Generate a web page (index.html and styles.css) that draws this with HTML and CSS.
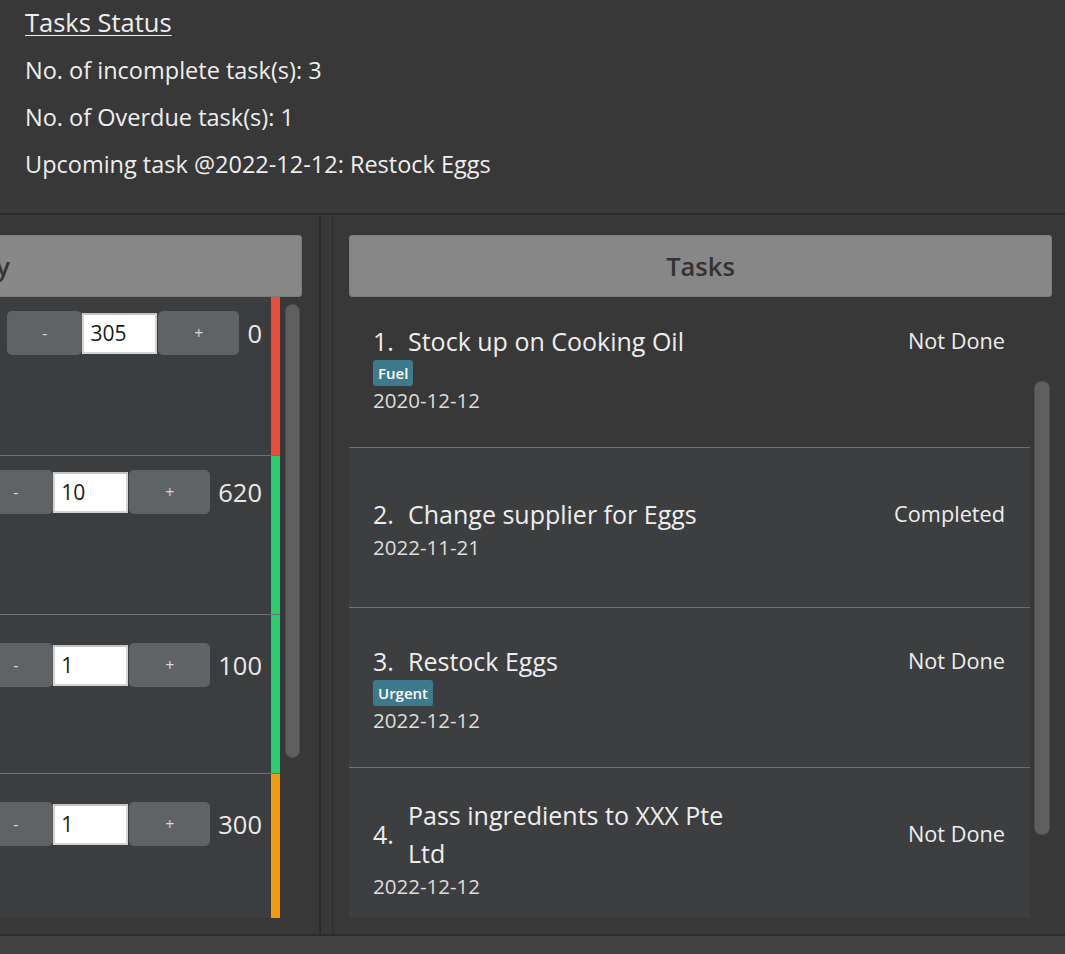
FILE: index.html
```html
<!DOCTYPE html>
<html lang="en">
<head>
<meta charset="utf-8">
<title>Tasks</title>
<link rel="stylesheet" href="styles.css">
</head>
<body>
<div class="app">
  <section class="status">
    <h1 class="status-title">Tasks Status</h1>
    <p class="status-line">No. of incomplete task(s): 3</p>
    <p class="status-line">No. of Overdue task(s): 1</p>
    <p class="status-line">Upcoming task @2022-12-12: Restock Eggs</p>
  </section>

  <main class="main">
    <div class="left">
      <div class="panel-inv">
        <div class="panel-header">Inventory</div>
        <div class="list">
          <div class="rows">
            <div class="inv-row">
              <div class="controls">
                <div class="btn btn-minus">-</div>
                <input class="qty" type="text" value="305" readonly>
                <div class="btn btn-plus">+</div>
                <span class="count">0</span>
              </div>
              <div class="strip strip-red"></div>
            </div>
            <div class="inv-row">
              <div class="controls">
                <div class="btn btn-minus">-</div>
                <input class="qty" type="text" value="10" readonly>
                <div class="btn btn-plus">+</div>
                <span class="count">620</span>
              </div>
              <div class="strip strip-green"></div>
            </div>
            <div class="inv-row inv-row-low">
              <div class="controls">
                <div class="btn btn-minus">-</div>
                <input class="qty" type="text" value="1" readonly>
                <div class="btn btn-plus">+</div>
                <span class="count">100</span>
              </div>
              <div class="strip strip-green"></div>
            </div>
            <div class="inv-row inv-row-low">
              <div class="controls">
                <div class="btn btn-minus">-</div>
                <input class="qty" type="text" value="1" readonly>
                <div class="btn btn-plus">+</div>
                <span class="count">300</span>
              </div>
              <div class="strip strip-orange"></div>
            </div>
          </div>
          <div class="scroll"><div class="thumb thumb-inv"></div></div>
        </div>
      </div>
    </div>

    <div class="gutter"></div>

    <div class="right">
      <div class="panel-header">Tasks</div>
      <div class="list">
        <div class="cells">
          <div class="cells-inner">
            <div class="task task-first">
              <div class="task-head">
                <span class="num">1.</span>
                <span class="title">Stock up on Cooking Oil</span>
                <span class="state">Not Done</span>
              </div>
              <span class="tag">Fuel</span>
              <span class="date">2020-12-12</span>
            </div>
            <div class="task">
              <div class="task-head">
                <span class="num">2.</span>
                <span class="title">Change supplier for Eggs</span>
                <span class="state">Completed</span>
              </div>
              <span class="date">2022-11-21</span>
            </div>
            <div class="task">
              <div class="task-head">
                <span class="num">3.</span>
                <span class="title">Restock Eggs</span>
                <span class="state">Not Done</span>
              </div>
              <span class="tag">Urgent</span>
              <span class="date">2022-12-12</span>
            </div>
            <div class="task">
              <div class="task-head">
                <span class="num">4.</span>
                <span class="title">Pass ingredients to XXX Pte Ltd</span>
                <span class="state">Not Done</span>
              </div>
              <span class="date">2022-12-12</span>
            </div>
          </div>
        </div>
        <div class="scroll scroll-tasks"><div class="thumb thumb-tasks"></div></div>
      </div>
    </div>
  </main>

  <footer class="statusbar"></footer>
</div>
</body>
</html>
```

FILE: styles.css
```css
html, body {
  margin: 0;
  padding: 0;
}

body {
  background: #383838;
  font-family: "Open Sans", "Noto Sans", sans-serif;
  color: #eeeeee;
}

.app {
  height: 954px;
  display: flex;
  flex-direction: column;
  overflow: hidden;
}

/* ---------- top status ---------- */
.status {
  height: 213px;
  flex: 0 0 213px;
  box-sizing: border-box;
  padding: 0 0 0 25px;
}

.status-title {
  margin: 0 0 3px 0;
  font-size: 25.5px;
  font-weight: 400;
  line-height: 44px;
  text-decoration: underline;
  text-decoration-thickness: 1px;
  text-underline-offset: 3px;
}

.status-line {
  margin: 0;
  font-size: 23.5px;
  line-height: 47px;
}

/* ---------- main ---------- */
.main {
  flex: 0 0 721px;
  box-sizing: border-box;
  border-top: 2px solid #2b2b2b;
  display: flex;
}

.left {
  flex: 0 0 319px;
  overflow: hidden;
  display: flex;
  justify-content: flex-end;
}

.panel-inv {
  flex: 0 0 720px;
  padding-top: 20px;
}

.gutter {
  flex: 0 0 14px;
  box-sizing: border-box;
  border-left: 2px solid #2c2c2c;
  border-right: 1px solid #2c2c2c;
  background: #393939;
}

.right {
  flex: 1;
  padding: 20px 13px 0 16px;
}

.panel-header {
  height: 62px;
  box-sizing: border-box;
  background: #878787;
  border: 1px solid #7b7b7b;
  border-radius: 3px;
  display: flex;
  align-items: center;
  justify-content: center;
  font-size: 25.5px;
  font-weight: 600;
  color: #333333;
}

.panel-inv .panel-header,
.panel-inv .list {
  margin-right: 17px;
}

.list {
  display: flex;
  height: 621px;
  overflow: hidden;
}

.scroll {
  flex: 0 0 22px;
}

.thumb {
  background: #5f5f5f;
  border: 1px solid #4d4d4d;
  border-radius: 7px;
  box-sizing: border-box;
}

.thumb-inv {
  margin: 7px 2px 0 5px;
  width: 15px;
  height: 454px;
}

.thumb-tasks {
  margin: 84px 2px 0 4px;
  width: 16px;
  height: 454px;
}

/* ---------- inventory rows ---------- */
.rows {
  flex: 1;
  display: flex;
  flex-direction: column;
}

.inv-row {
  flex: 0 0 159px;
  box-sizing: border-box;
  border-bottom: 1px solid #707070;
  background: #3c3d3f;
  display: flex;
  justify-content: flex-end;
}

.controls {
  display: flex;
  align-items: center;
  align-self: flex-start;
  margin-top: 14px;
  padding-right: 9px;
}

.inv-row-low .controls {
  margin-top: 28px;
}

.btn {
  height: 44px;
  background: #5f6366;
  border-radius: 5px;
  color: #d8d8d8;
  font-size: 16px;
  display: flex;
  align-items: center;
  justify-content: center;
}

.btn-minus {
  width: 75px;
}

.btn-plus {
  width: 81px;
  margin-left: 1px;
}

.qty {
  width: 75px;
  height: 41px;
  box-sizing: border-box;
  margin: 0;
  border: 2px solid #d4d4d4;
  border-top-color: #c4c4c4;
  background: #ffffff;
  color: #1a1a1a;
  font-family: "Open Sans", "Noto Sans", sans-serif;
  font-size: 21px;
  padding: 0 0 0 6px;
  outline: none;
}

.count {
  margin-left: 8px;
  font-size: 25.5px;
  color: #eaeaea;
}

.strip {
  flex: 0 0 9px;
}

.strip-red { background: #e74c3c; }
.strip-green { background: #2ecc71; }
.strip-orange { background: #f39c12; }

/* ---------- tasks ---------- */
.cells {
  flex: 1;
  overflow: hidden;
}

.cells-inner {
  margin-top: -9px;
}

.task {
  height: 160px;
  box-sizing: border-box;
  border-bottom: 1px solid #707070;
  background: #3d3e40;
  display: flex;
  flex-direction: column;
  justify-content: center;
  padding: 0 25px 0 24px;
}

.task-first {
  background: #383838;
}

.task-head {
  display: flex;
  align-items: center;
}

.num {
  flex: 0 0 35px;
  font-size: 25px;
  line-height: 38px;
}

.title {
  font-size: 25px;
  line-height: 38px;
  max-width: 340px;
}

.state {
  margin-left: auto;
  font-size: 21.7px;
}

.tag {
  align-self: flex-start;
  background: #3d7a8c;
  border-radius: 3px;
  padding: 0 5px;
  font-size: 15px;
  font-weight: 600;
  line-height: 26px;
  color: #ffffff;
}

.date {
  font-size: 20.5px;
  line-height: 28px;
  color: #dddddd;
}

/* ---------- bottom bar ---------- */
.statusbar {
  flex: 0 0 20px;
  box-sizing: border-box;
  border-top: 2px solid #2b2b2b;
  background: #434343;
}
```
